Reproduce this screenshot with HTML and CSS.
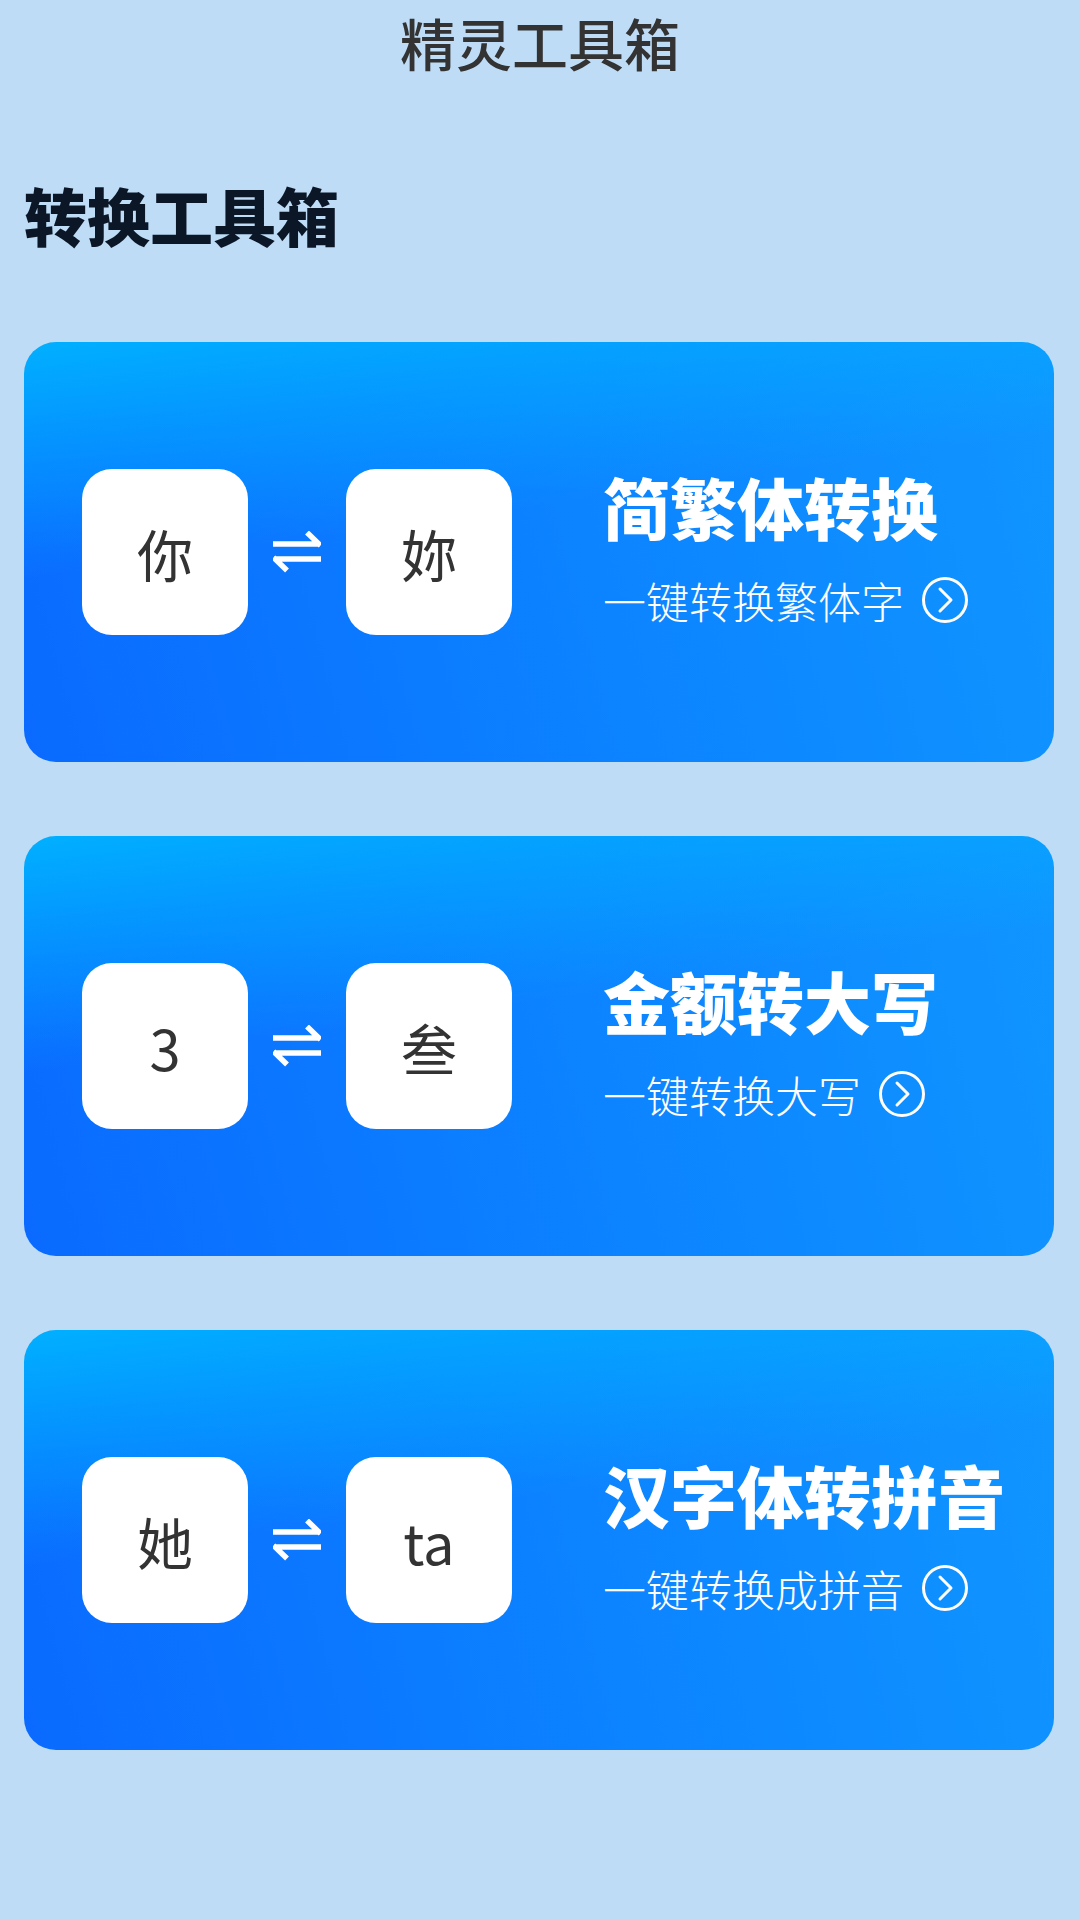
FILE: index.html
```html
<!DOCTYPE html>
<html lang="zh-CN">
<head>
    <meta charset="UTF-8">
    <title>精灵工具箱</title>
    <link rel="stylesheet" href="styles.css">
</head>
<body>
    <div class="header">精灵工具箱</div>

    <h2 class="section-title">转换工具箱</h2>

    <div class="cards">
        <!-- 简繁体 -->
        <div class="card">
            <div class="demo">
                <span class="key">你</span>
                <svg class="swap" width="48" height="42" viewBox="0 0 48 42">
                    <path d="M0 13H47M47.5 14.5L34 1.5M48 28H1M0.5 26.5L14 39.5" stroke="#fff" stroke-width="5.5" fill="none"/>
                </svg>
                <span class="key">妳</span>
            </div>
            <div class="info">
                <div class="info-title">简繁体转换</div>
                <div class="info-sub">一键转换繁体字
                    <svg class="go" width="46" height="46" viewBox="0 0 46 46">
                        <circle cx="23" cy="23" r="21.5" stroke="#fff" stroke-width="3" fill="none"/>
                        <path d="M18 12L29 23L18 34" stroke="#fff" stroke-width="3" fill="none" stroke-linecap="round" stroke-linejoin="round"/>
                    </svg>
                </div>
            </div>
        </div>

        <!-- 金额 -->
        <div class="card">
            <div class="demo">
                <span class="key">3</span>
                <svg class="swap" width="48" height="42" viewBox="0 0 48 42">
                    <path d="M0 13H47M47.5 14.5L34 1.5M48 28H1M0.5 26.5L14 39.5" stroke="#fff" stroke-width="5.5" fill="none"/>
                </svg>
                <span class="key">叁</span>
            </div>
            <div class="info">
                <div class="info-title">金额转大写</div>
                <div class="info-sub">一键转换大写
                    <svg class="go" width="46" height="46" viewBox="0 0 46 46">
                        <circle cx="23" cy="23" r="21.5" stroke="#fff" stroke-width="3" fill="none"/>
                        <path d="M18 12L29 23L18 34" stroke="#fff" stroke-width="3" fill="none" stroke-linecap="round" stroke-linejoin="round"/>
                    </svg>
                </div>
            </div>
        </div>

        <!-- 拼音 -->
        <div class="card">
            <div class="demo">
                <span class="key">她</span>
                <svg class="swap" width="48" height="42" viewBox="0 0 48 42">
                    <path d="M0 13H47M47.5 14.5L34 1.5M48 28H1M0.5 26.5L14 39.5" stroke="#fff" stroke-width="5.5" fill="none"/>
                </svg>
                <span class="key">ta</span>
            </div>
            <div class="info">
                <div class="info-title">汉字体转拼音</div>
                <div class="info-sub">一键转换成拼音
                    <svg class="go" width="46" height="46" viewBox="0 0 46 46">
                        <circle cx="23" cy="23" r="21.5" stroke="#fff" stroke-width="3" fill="none"/>
                        <path d="M18 12L29 23L18 34" stroke="#fff" stroke-width="3" fill="none" stroke-linecap="round" stroke-linejoin="round"/>
                    </svg>
                </div>
            </div>
        </div>
    </div>
</body>
</html>
```

FILE: styles.css
```css
* {
    margin: 0;
    padding: 0;
    box-sizing: border-box;
}
body {
    width: 1080px;
    min-height: 1920px;
    background-color: #bedcf6;
    font-family: "Noto Sans CJK SC", "Noto Sans", sans-serif;
}
.header {
    height: 84px;
    line-height: 84px;
    font-size: 56px;
    font-weight: 500;
    color: #333;
    text-align: center;
}
.section-title {
    margin-top: 85px;
    padding-left: 24px;
    font-size: 63px;
    line-height: 90px;
    font-weight: 900;
    color: #0b1727;
}
.cards {
    display: flex;
    flex-direction: column;
    gap: 74px;
    padding: 83px 26px 0 24px;
}
.card {
    height: 420px;
    border-radius: 32px;
    display: flex;
    align-items: center;
    padding-left: 58px;
    background:
        linear-gradient(172deg, rgba(0, 176, 255, 1) 0%, rgba(0, 176, 255, 0) 42%),
        linear-gradient(75deg, #0a6aff 0%, #0c84ff 55%, #1096ff 100%);
}
.demo {
    display: flex;
    align-items: center;
}
.key {
    width: 166px;
    height: 166px;
    border-radius: 30px;
    background-color: #fff;
    display: flex;
    align-items: center;
    justify-content: center;
    font-size: 56px;
    color: #333;
}
.swap {
    display: block;
    margin: 0 25px;
}
.info {
    margin-left: 91px;
    margin-bottom: 10px;
    color: #fff;
}
.info-title {
    font-size: 67px;
    line-height: 80px;
    font-weight: 900;
}
.info-sub {
    margin-top: 26px;
    display: flex;
    align-items: center;
    font-size: 43px;
    line-height: 56px;
    font-weight: 300;
}
.go {
    display: block;
    margin-left: 18px;
}
```
